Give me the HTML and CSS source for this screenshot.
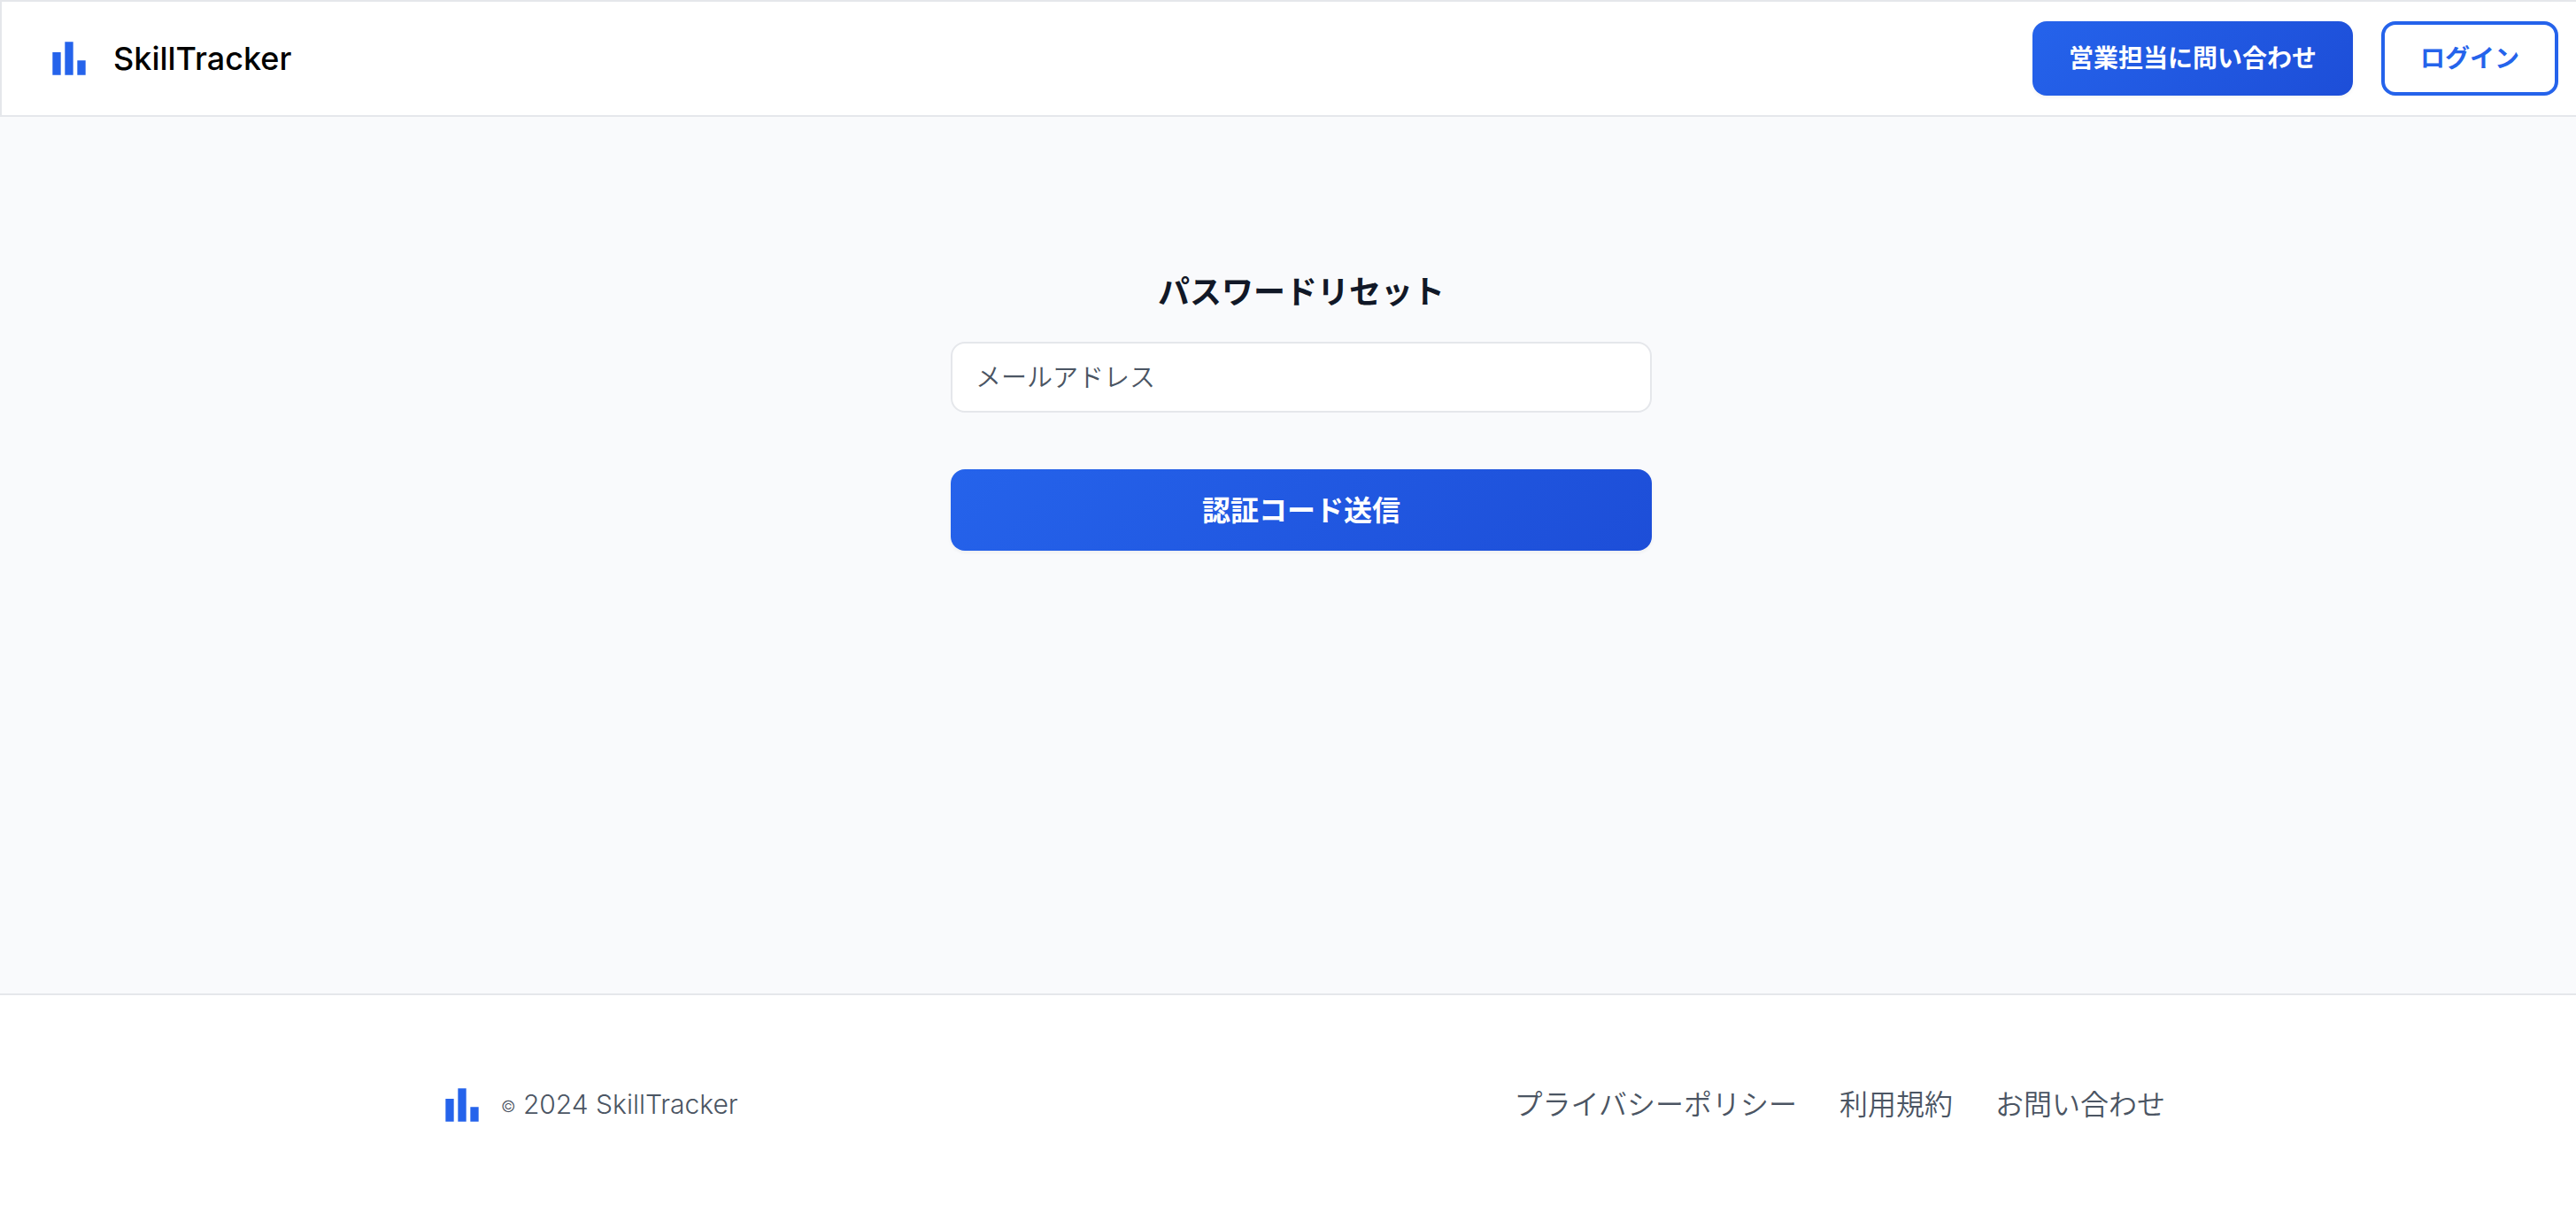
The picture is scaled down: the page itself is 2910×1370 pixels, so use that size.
FILE: index.html
```html
<!DOCTYPE html>
<html lang="ja">
  <head>
    <meta charset="UTF-8" />
    <meta name="viewport" content="width=device-width, initial-scale=1.0" />
    <title>SkillTracker</title>
    <link rel="stylesheet" href="styles.css">
  </head>
  <body>
    <header class="header">
      <a class="brand" href="#">
        <svg class="logo" viewBox="0 0 24 24" aria-hidden="true">
          <path d="M4 9h4v11H4zm12 4h4v7h-4zm-6-9h4v16h-4z" />
        </svg>
        <span class="brand-name">SkillTracker</span>
      </a>
      <nav class="header-actions">
        <button class="btn btn-primary" type="button">営業担当に問い合わせ</button>
        <button class="btn btn-outline" type="button">ログイン</button>
      </nav>
    </header>

    <main class="main">
      <form class="reset-form">
        <h1 class="title">パスワードリセット</h1>
        <input class="email" type="email" placeholder="メールアドレス" aria-label="メールアドレス" />
        <button class="btn btn-primary btn-submit" type="submit">認証コード送信</button>
      </form>
    </main>

    <footer class="footer">
      <div class="footer-inner">
        <div class="copyright">
          <svg class="logo" viewBox="0 0 24 24" aria-hidden="true">
            <path d="M4 9h4v11H4zm12 4h4v7h-4zm-6-9h4v16h-4z" />
          </svg>
          <p class="copyright-text"><span class="copy-sign">©</span> 2024 SkillTracker</p>
        </div>
        <nav class="footer-links">
          <a href="#">プライバシーポリシー</a>
          <a href="#">利用規約</a>
          <a href="#">お問い合わせ</a>
        </nav>
      </div>
    </footer>
  </body>
</html>
```
FILE: styles.css
```css
* {
  box-sizing: border-box;
}
body {
  display: flex;
  flex-direction: column;
  min-height: 100vh;
  margin: 0;
  background-color: #f9fafc;
  color: #111827;
  font-family: "Noto Sans CJK JP", sans-serif;
  font-size: 32px;
  line-height: 48px;
}
a {
  color: inherit;
  text-decoration: none;
}

/* header */
.header {
  display: flex;
  justify-content: space-between;
  align-items: center;
  padding: 22px 20px 22px 48px;
  background-color: #fff;
  border: 2px solid #e5e7eb;
  border-right: none;
}
.brand {
  display: flex;
  align-items: center;
  gap: 22px;
}
.logo {
  width: 56px;
  height: 56px;
  fill: #2563eb;
}
.brand-name {
  color: #000;
  font-family: Inter, sans-serif;
  font-size: 36px;
  font-weight: 500;
}
.header-actions {
  display: flex;
  gap: 32px;
}
.btn {
  height: 84px;
  padding: 0 41px 4px;
  border: none;
  border-radius: 16px;
  font-family: inherit;
  font-size: 28px;
  font-weight: 600;
  cursor: pointer;
}
.btn-primary {
  background: linear-gradient(135deg, #2563eb, #1d4ed8);
  box-shadow: 0 2px 4px rgba(0, 0, 0, 0.05);
  color: #fff;
}
.btn-outline {
  padding: 0 40px 4px;
  background-color: #fff;
  border: 4px solid #2563eb;
  color: #2563eb;
}

/* reset form */
.main {
  flex: 1;
  padding: 170px 0 0 30px;
}
.reset-form {
  display: flex;
  flex-direction: column;
  max-width: 792px;
  margin: 0 auto;
}
.title {
  margin: 0 0 34px;
  font-size: 36px;
  font-weight: 600;
  line-height: 50px;
  text-align: center;
}
.email {
  height: 80px;
  padding: 0 26px 4px;
  background-color: #fff;
  border: 2px solid #e5e7eb;
  border-radius: 16px;
  color: #111827;
  font-family: inherit;
  font-size: 29px;
  font-weight: 350;
}
.email::placeholder {
  color: #4b5563;
  opacity: 1;
}
.btn-submit {
  height: 92px;
  margin-top: 64px;
  font-size: 32px;
}

/* footer */
.footer {
  padding: 96px 0 94px 30px;
  background-color: #fff;
  border-top: 2px solid #e5e7eb;
  color: #4b5563;
  font-weight: 350;
}
.footer-inner {
  display: flex;
  justify-content: space-between;
  align-items: center;
  max-width: 1952px;
  margin: 0 auto;
}
.copyright {
  display: flex;
  align-items: center;
  gap: 16px;
}
.copyright-text {
  margin: 0;
  font-family: Inter, sans-serif;
  font-size: 30px;
  font-weight: 300;
}
.copy-sign {
  font-size: 18px;
  vertical-align: 2px;
}
.footer-links {
  display: flex;
  gap: 48px;
  padding-bottom: 6px;
}
```
